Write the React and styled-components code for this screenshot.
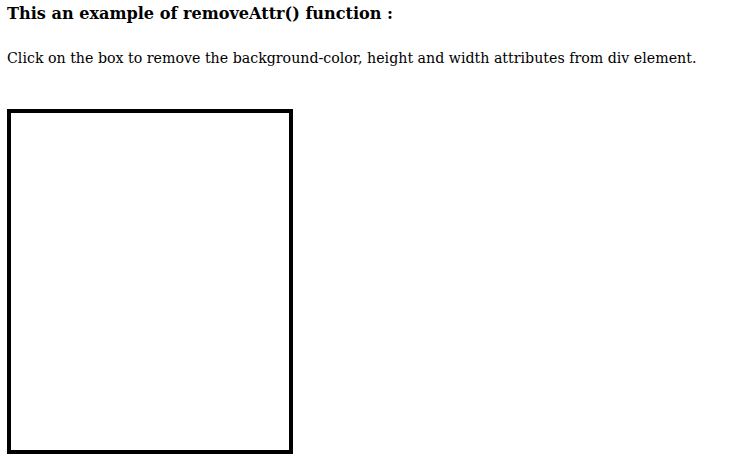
import React from "react";
import styled, { createGlobalStyle } from "styled-components";

const Global = createGlobalStyle`
  html, body { margin: 0; padding: 0; background: #fff; }
  body { font-family: "DejaVu Serif", "Liberation Serif", serif; color: #000; }
`;

const Page = styled.div`
  display: flex;
  flex-direction: column;
  align-items: flex-start;
  padding: 4.5px 0 0 7px;
`;

const Title = styled.h3`
  margin: 0;
  font-size: 16.1px;
  font-weight: bold;
  line-height: 18px;
  white-space: nowrap;
`;

const Text = styled.p`
  margin: 27px 0 0;
  font-size: 14.2px;
  line-height: 17px;
  white-space: nowrap;
`;

const Box = styled.div`
  margin-top: 42.5px;
  width: 278px;
  height: 337px;
  border: 4px solid #000;
  background: #fff;
  cursor: pointer;
`;

export default function App() {
  return (
    <>
      <Global />
      <Page>
        <Title>This an example of removeAttr() function :</Title>
        <Text>
          Click on the box to remove the background-color, height and width attributes from div element.
        </Text>
        <Box />
      </Page>
    </>
  );
}
